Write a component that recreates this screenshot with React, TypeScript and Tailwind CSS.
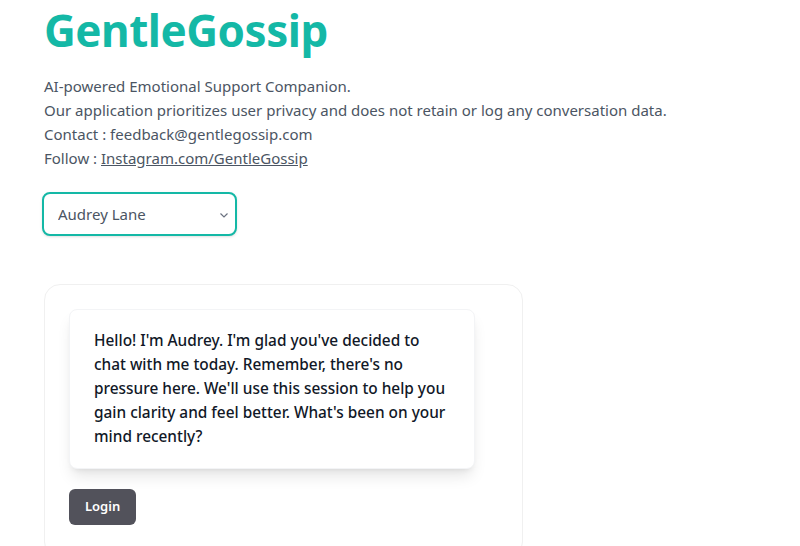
import React from 'react'

const FONT = { fontFamily: '"Noto Sans", "Open Sans", sans-serif' }

function App() {
    return (
        <div className='min-h-screen bg-white pl-[44px] pt-[2px]' style={FONT}>
            <h1 className='text-[44px] leading-[56px] font-bold tracking-[-0.5px] text-[#14b8a6]'>GentleGossip</h1>

            <div className='mt-[16px] text-[15px] leading-6 text-[#4b5563]'>
                <p>AI-powered Emotional Support Companion.</p>
                <p>Our application prioritizes user privacy and does not retain or log any conversation data.</p>
                <p>Contact : feedback@gentlegossip.com</p>
                <p>Follow : <a href='#' className='underline'>Instagram.com/GentleGossip</a></p>
            </div>

            <div className='mt-[22px] -ml-[2px] relative w-[195px]'>
                <select className='appearance-none block w-full h-[44px] rounded-lg border-2 border-[#14b8a6] bg-white pl-[14px] pr-8 text-[15px] text-[#4b5563] shadow-sm outline-none'>
                    <option>Audrey Lane</option>
                </select>
                <svg className='absolute right-[8px] top-[19px] pointer-events-none' width='10' height='8' viewBox='0 0 10 8' fill='none'>
                    <path d='M1.5 2.5 L5 6 L8.5 2.5' stroke='#6b7280' strokeWidth='1.2' />
                </svg>
            </div>

            {/* chat panel */}
            <div className='mt-[48px] w-[479px] rounded-2xl border border-[#f0f0f0] p-6 pb-8'>
                <div className='w-[406px] rounded-lg border border-[#f3f4f6] bg-white px-6 py-[19px] shadow-lg'>
                    <p className='text-[15.4px] leading-6 font-medium text-[#111827]'>
                        Hello! I'm Audrey. I'm glad you've decided to chat with me today. Remember, there's no pressure here. We'll use this session to help you gain clarity and feel better. What's been on your mind recently?
                    </p>
                </div>
                <button type='button' className='mt-5 h-9 rounded-md bg-[#52525b] px-4 text-[13px] font-semibold text-white'>
                    Login
                </button>
            </div>
        </div>
    )
}

export default App
